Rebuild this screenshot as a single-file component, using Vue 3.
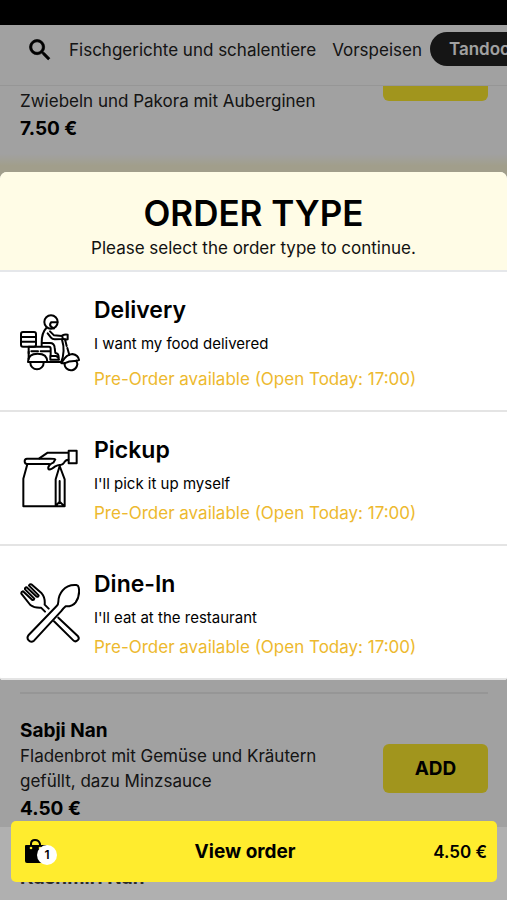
<script setup>
const categories = [
  { name: 'Fischgerichte und schalentiere', active: false },
  { name: 'Vorspeisen', active: false },
  { name: 'Tandoori', active: true },
]

const orderTypes = [
  { id: 'delivery', title: 'Delivery', text: 'I want my food delivered' },
  { id: 'pickup', title: 'Pickup', text: "I'll pick it up myself" },
  { id: 'dine', title: 'Dine-In', text: "I'll eat at the restaurant" },
]
</script>

<template>
  <div class="app">
    <div class="status"></div>
    <nav class="nav">
      <button class="search" aria-label="Search">
        <svg viewBox="0 0 24 24" width="28" height="28">
          <path d="M15.5 14h-.79l-.28-.27A6.47 6.47 0 0 0 16 9.5 6.5 6.5 0 1 0 9.5 16c1.61 0 3.09-.59 4.23-1.57l.27.28v.79l5 4.99L20.49 19l-4.99-5zm-6 0A4.5 4.5 0 1 1 14 9.5 4.49 4.49 0 0 1 9.5 14z" fill="#000" stroke="#000" stroke-width=".6" />
        </svg>
      </button>
      <a v-for="c in categories" :key="c.name" href="#" class="category" :class="{ active: c.active }">{{ c.name }}</a>
    </nav>

    <main class="list">
      <article class="item item-first">
        <div class="info">
          <p class="description">Zwiebeln und Pakora mit Auberginen</p>
          <p class="price">7.50 €</p>
        </div>
        <button class="add" aria-label="Add"></button>
      </article>
      <div class="banner"></div>
      <article class="item item-ruled">
        <div class="info">
          <h3 class="name">Sabji Nan</h3>
          <p class="description">Fladenbrot mit Gemüse und Kräutern gefüllt, dazu Minzsauce</p>
          <p class="price">4.50 €</p>
        </div>
        <button class="add">ADD</button>
      </article>
      <article class="item item-last">
        <h3 class="name">Kashmiri Nan</h3>
      </article>
    </main>

    <div class="overlay">
      <section class="modal" role="dialog" aria-labelledby="order-title">
        <header class="modal-head">
          <h1 id="order-title">ORDER TYPE</h1>
          <p>Please select the order type to continue.</p>
        </header>
        <button v-for="o in orderTypes" :key="o.id" class="option" :class="o.id">
          <svg v-if="o.id === 'delivery'" class="icon" viewBox="60 61 180 180">
            <circle cx="153" cy="91" r="20" />
            <path d="M172 92H153q-6 8 1 14l8 4" />
            <rect x="63" y="121" width="45" height="44" rx="6" />
            <path d="M63 136h45M63 150h45" />
            <path d="M139 109C129 119 125 134 125 153v12M125 154h25q13 0 14 14l2 16q10 1 10 13M86 165v20M86 165h61q5 0 5 6v20M94 179h20M122 179h28" />
            <path d="M143 125l10 13q4 5 11 5l24-1M150 119l12 12 24 2M187 131q8-4 16-2v14q-8 2-15-2z" />
            <path d="M186 144q11 35-3 69M195 143l5 20M202 169l6 21M151 202v-9h17q8 3 9 11h-26z" />
            <path d="M84 211q0-25 29-25t29 25zM138 211h48q13-23 31-24 18 3 20 18l-10 3q-18-1-34 7h-8" />
            <path d="M91 213a20 20 0 1 0 40 0M194 214a19 19 0 1 0 35-7M86 180v22" />
          </svg>
          <svg v-else-if="o.id === 'pickup'" class="icon" viewBox="60 54 180 180">
            <path d="M147 99H81q-7 0-7-8t7-8h69q15 0 16 2l-6 10q-6 2-10 6-8 8-4 14 7 2 20-9 8-5 15-4 7 0 11-7 4-8 13-9" />
            <path d="M118 82l25-17h61" />
            <rect x="206" y="59" width="24" height="38" />
            <path d="M82 100l-12 43v83h124v-81l-15-40-12 40v81M179 150v67M167 225l12-13 13 13" />
          </svg>
          <svg v-else class="icon" viewBox="60 67 180 180">
            <path d="M229 73q-26-2-41 16-13 15-13 34 0 8-5 13l-84 87q-7 8 0 16t16 1l81-88q6-8 14-15 20 1 30-12 14-20 9-45-1-6-7-7z" />
            <path d="M146 144l-12-12q2-22-9-34L94 71q-5-2-7 4l29 29q-1 6-6 4L80 80q-6 0-5 6l28 28q-1 5-6 4L69 92q-6 1-5 7l27 34q12 9 32 8l12 12" />
            <path d="M175 171l59 56q5 7-1 12-7 6-13 0l-58-57" />
          </svg>
          <span class="option-body">
            <span class="option-title">{{ o.title }}</span>
            <span class="option-text">{{ o.text }}</span>
            <span class="option-note">Pre-Order available (Open Today: 17:00)</span>
          </span>
        </button>
      </section>
    </div>

    <footer class="footer">
      <button class="order">
        <span class="bag">
          <svg viewBox="0 0 24 26" width="24" height="26">
            <path d="M2 6h20q1 0 1 1v17H3q-2 0-2-2V7q0-1 1-1z" fill="#000" />
            <path d="M7 9V5q0-4 4-4t5 4v4" fill="none" stroke="#000" stroke-width="2" />
            <circle cx="7" cy="9" r="1.3" fill="#ffec2e" />
            <circle cx="16" cy="9" r="1.3" fill="#ffec2e" />
          </svg>
          <span class="count">1</span>
        </span>
        <span class="order-label">View order</span>
        <span class="order-price">4.50 €</span>
      </button>
    </footer>
  </div>
</template>

<style>
body {
  margin: 0;
  background: #fff;
}
</style>

<style scoped>
* {
  box-sizing: border-box;
}
.app {
  height: 100vh;
  overflow: hidden;
  display: flex;
  flex-direction: column;
  font-family: Inter, "Liberation Sans", sans-serif;
  color: #000;
}
h1, h3, p {
  margin: 0;
}
button {
  font: inherit;
  color: inherit;
  border: 0;
  padding: 0;
  background: none;
}
.status {
  flex: none;
  height: 25px;
  background: #000;
}
.nav {
  flex: none;
  display: flex;
  align-items: flex-start;
  height: 61px;
  padding: 7px 0 0 26px;
  border-bottom: 1px solid #eee;
  overflow: hidden;
}
.search {
  flex: none;
  display: flex;
  padding: 4px 7px 0 0;
}
.category {
  flex: none;
  padding: 0 8px;
  font-size: 17px;
  line-height: 36px;
  color: #222;
  text-decoration: none;
}
.category.active {
  padding: 0 19px;
  border-radius: 17px;
  line-height: 34px;
  font-weight: 600;
  background: #222;
  color: #fff;
}
.list {
  flex: 1;
  min-height: 0;
  overflow: hidden;
}
.item {
  display: flex;
  justify-content: space-between;
  align-items: center;
  margin: 0 19px 0 20px;
}
.info {
  flex: 1;
  max-width: 310px;
}
.name {
  font-size: 19px;
  line-height: 27px;
  font-weight: 700;
}
.description {
  font-size: 17px;
  line-height: 25px;
  color: #222;
}
.price {
  font-size: 19px;
  line-height: 30px;
  font-weight: 700;
}
.add {
  width: 105px;
  height: 49px;
  margin-bottom: 5px;
  border-radius: 6px;
  background: #ffec2e;
  font-size: 19px;
  font-weight: 700;
}
.item-first {
  align-items: flex-start;
  margin-top: -34px;
}
.item-first .info {
  padding-top: 37px;
}
.banner {
  height: 300px;
  margin: 10px 0 238px;
  background: linear-gradient(#fff, #fffbdc 12px);
}
.item-ruled {
  padding: 23px 0 6px;
  border-top: 2px solid #eee;
}
.item-last {
  padding-top: 34px;
}
.overlay {
  position: fixed;
  inset: 0;
  display: flex;
  align-items: center;
  padding-bottom: 48px;
  background: rgba(0, 0, 0, 0.37);
}
.modal {
  width: 100%;
  border-radius: 7px 7px 3px 3px;
  overflow: hidden;
  background: #fff;
}
.modal-head {
  padding: 19px 16px 8px;
  border-bottom: 2px solid #e5e7ea;
  background: #fffce6;
  text-align: center;
}
.modal-head h1 {
  font-size: 35px;
  line-height: 44px;
  font-weight: 600;
}
.modal-head p {
  font-size: 17px;
  line-height: 27px;
  color: #111;
}
.option {
  display: flex;
  align-items: center;
  gap: 14px;
  width: 100%;
  padding: 20px 20px 18px;
  border-bottom: 2px solid #e4e4e4;
  text-align: left;
}
.icon {
  flex: none;
  width: 60px;
  height: 60px;
  fill: none;
  stroke: #000;
  stroke-width: 6;
  stroke-linecap: round;
  stroke-linejoin: round;
}
.option-body {
  display: flex;
  flex-direction: column;
}
.option-title {
  font-size: 23px;
  line-height: 36px;
  font-weight: 600;
}
.option-text {
  font-size: 15px;
  line-height: 32px;
}
.option-note {
  font-size: 17px;
  line-height: 26px;
  color: #edb92e;
}
.delivery .option-note {
  padding-top: 6px;
}
.footer {
  position: fixed;
  inset: auto 0 0;
  padding: 0 10px 18px 11px;
  background: linear-gradient(transparent 6px, rgba(255, 255, 255, 0.17) 6px);
}
.order {
  display: flex;
  justify-content: space-between;
  align-items: center;
  width: 100%;
  height: 61px;
  padding: 0 10px 0 13px;
  border-radius: 5px;
  background: #ffec2e;
  font-weight: 600;
}
.bag {
  display: flex;
  align-items: center;
}
.count {
  width: 20px;
  margin: 7px 0 0 -11px;
  border-radius: 50%;
  background: #fff;
  font-size: 12px;
  line-height: 20px;
}
.order-label {
  font-size: 19px;
  font-weight: 700;
}
.order-price {
  font-size: 17px;
}
</style>
